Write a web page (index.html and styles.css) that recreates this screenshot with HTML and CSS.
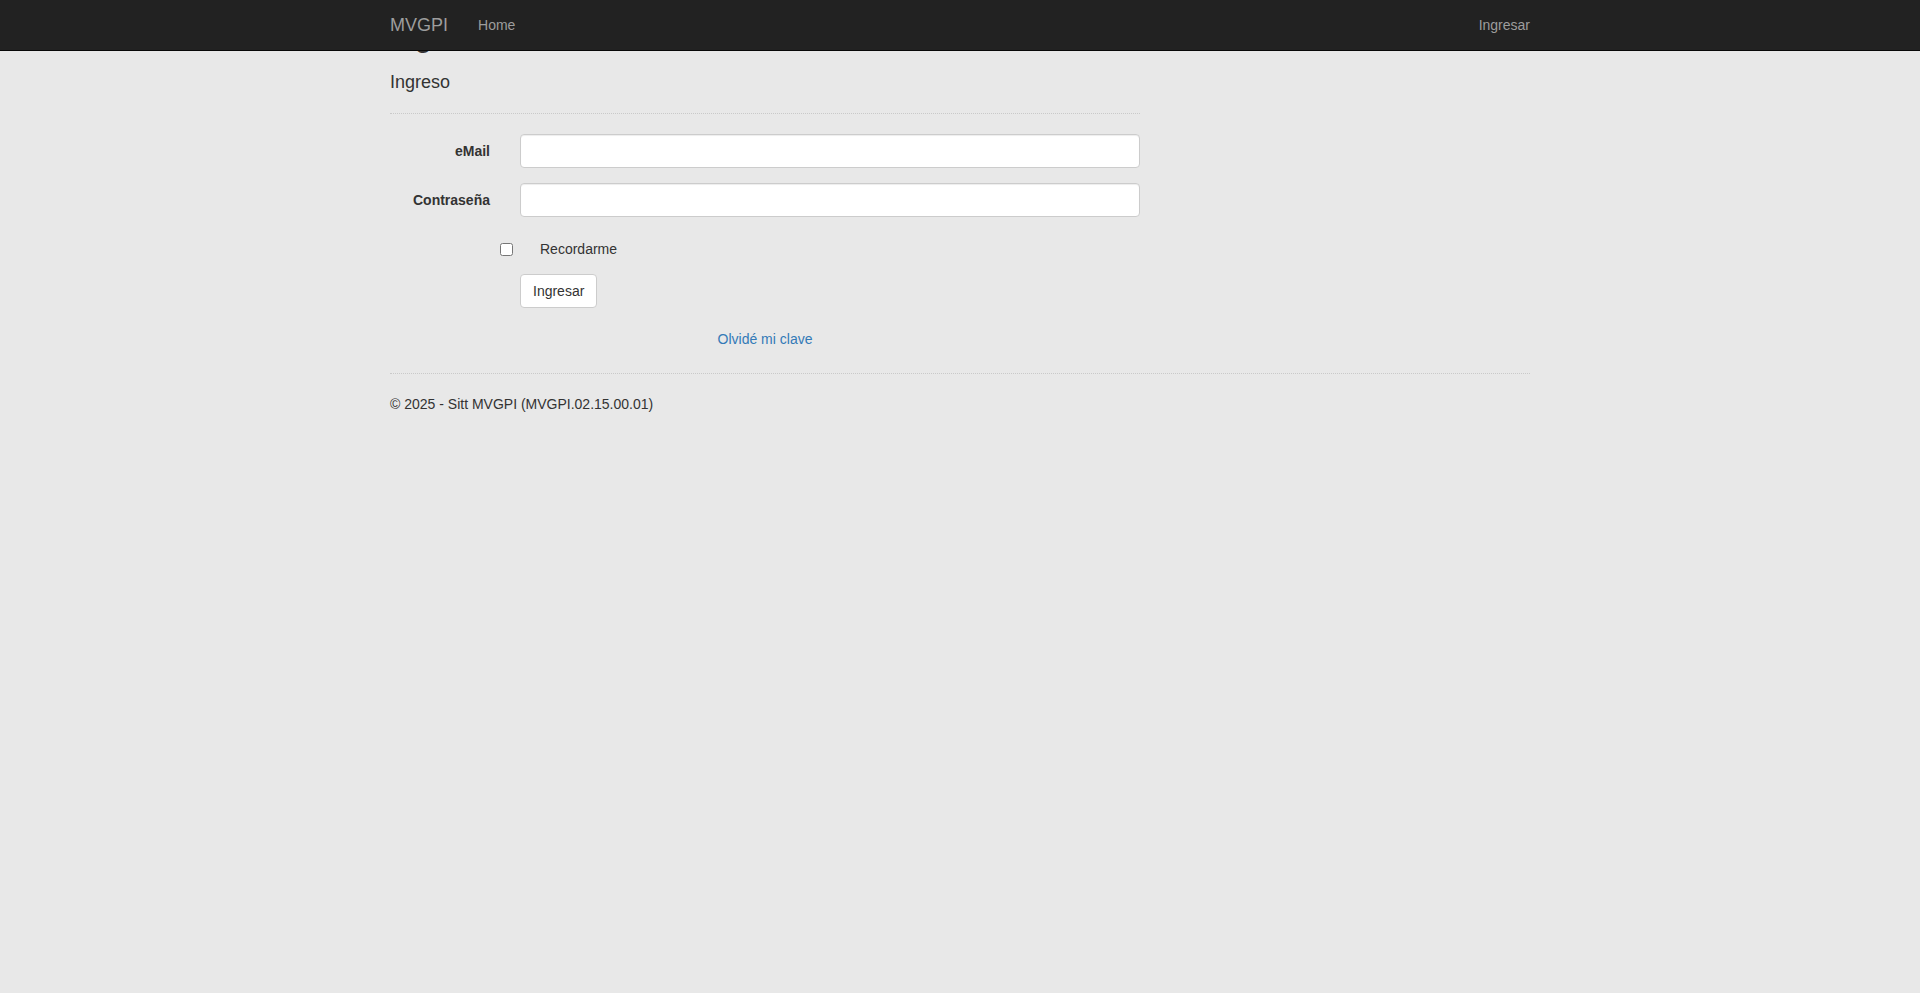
FILE: index.html
```html
<!DOCTYPE html>
<html lang="es">
<head>
<meta charset="utf-8">
<title>Ingreso - MVGPI</title>
<link rel="stylesheet" href="styles.css">
</head>
<body>
<nav class="navbar">
  <div class="container nav-inner">
    <a class="brand" href="#">MVGPI</a>
    <ul class="nav">
      <li><a href="#">Home</a></li>
    </ul>
    <ul class="nav nav-right">
      <li><a href="#">Ingresar</a></li>
    </ul>
  </div>
</nav>

<div class="container body-content">
  <h2 class="page-title">Ingreso.</h2>
  <div class="main-col">
    <section class="login-form">
      <h4 class="section-title">Ingreso</h4>
      <hr class="rule">
      <form class="form-horizontal">
        <div class="form-group">
          <label class="control-label" for="email">eMail</label>
          <input class="form-control" id="email" type="text">
        </div>
        <div class="form-group">
          <label class="control-label" for="pwd">Contraseña</label>
          <input class="form-control" id="pwd" type="password">
        </div>
        <div class="form-group">
          <div class="offset checkbox">
            <label class="check-label"><input type="checkbox" class="check-input"><span>Recordarme</span></label>
          </div>
        </div>
        <div class="form-group">
          <div class="offset">
            <button type="button" class="btn">Ingresar</button>
          </div>
        </div>
      </form>
      <p class="forgot"><a href="#">Olvidé mi clave</a></p>
    </section>
  </div>
  <hr class="rule footer-rule">
  <footer class="footer">
    <p>© 2025 - Sitt MVGPI (MVGPI.02.15.00.01)</p>
  </footer>
</div>
</body>
</html>
```

FILE: styles.css
```css
* { box-sizing: border-box; }

html, body {
  margin: 0;
  padding: 0;
}

body {
  background: #e8e8e8;
  color: #333;
  font-family: "Liberation Sans", Arial, Helvetica, sans-serif;
  font-size: 14px;
  line-height: 20px;
  min-height: 993px;
}

a { color: #337ab7; text-decoration: none; }

.container {
  width: 1170px;
  margin: 0 auto;
  padding: 0 15px;
}

/* Navbar */
.navbar {
  position: fixed;
  top: 0;
  left: 0;
  right: 0;
  z-index: 1030;
  height: 51px;
  background: #222;
  border-bottom: 1px solid #080808;
}

.nav-inner {
  display: flex;
  align-items: flex-start;
  height: 50px;
}

.brand {
  display: block;
  margin-left: -15px;
  padding: 15px;
  height: 50px;
  font-size: 18px;
  line-height: 20px;
  color: #9d9d9d;
}

.nav {
  display: flex;
  list-style: none;
  margin: 0;
  padding: 0;
}

.nav a {
  display: block;
  padding: 15px;
  line-height: 20px;
  color: #9d9d9d;
}

.nav-right {
  margin-left: auto;
  margin-right: -15px;
}

/* Body content */
.body-content {
  padding-top: 20px;
}

.page-title {
  margin: 0 0 20px;
  font-size: 30px;
  line-height: 33px;
  font-weight: 500;
  color: #333;
}

.main-col {
  width: 750px;
}

.section-title {
  margin: 0;
  font-size: 18px;
  line-height: 19.8px;
  font-weight: 500;
}

.rule {
  margin: 20px 0;
  height: 0;
  border: 0;
  border-top: 1px dotted #c9c9c9;
}

.form-horizontal {
  margin: 0;
}

.form-group {
  display: grid;
  grid-template-columns: 100px 620px;
  column-gap: 30px;
  margin-bottom: 15px;
}

.control-label {
  padding-top: 7px;
  text-align: right;
  font-weight: 700;
  line-height: 20px;
}

.form-control {
  display: block;
  width: 620px;
  height: 34px;
  padding: 6px 12px;
  font: inherit;
  color: #555;
  background: #fff;
  border: 1px solid #ccc;
  border-radius: 4px;
  box-shadow: inset 0 1px 1px rgba(0, 0, 0, 0.075);
}

.offset {
  grid-column: 2;
}

.checkbox {
  padding-top: 7px;
  min-height: 27px;
}

.check-label {
  display: flex;
  align-items: flex-start;
  min-height: 20px;
  line-height: 20px;
  font-weight: 400;
}

.check-input {
  width: 13px;
  height: 13px;
  margin: 4px 27px 0 -20px;
  flex: none;
}

.btn {
  display: block;
  height: 34px;
  padding: 6px 12px;
  font: inherit;
  line-height: 20px;
  color: #333;
  background: #fff;
  border: 1px solid #ccc;
  border-radius: 4px;
}

.forgot {
  margin: 21px 0 0;
  text-align: center;
  line-height: 20px;
}

.footer-rule {
  margin-top: 24px;
}

.footer p {
  margin: 0;
}
```
